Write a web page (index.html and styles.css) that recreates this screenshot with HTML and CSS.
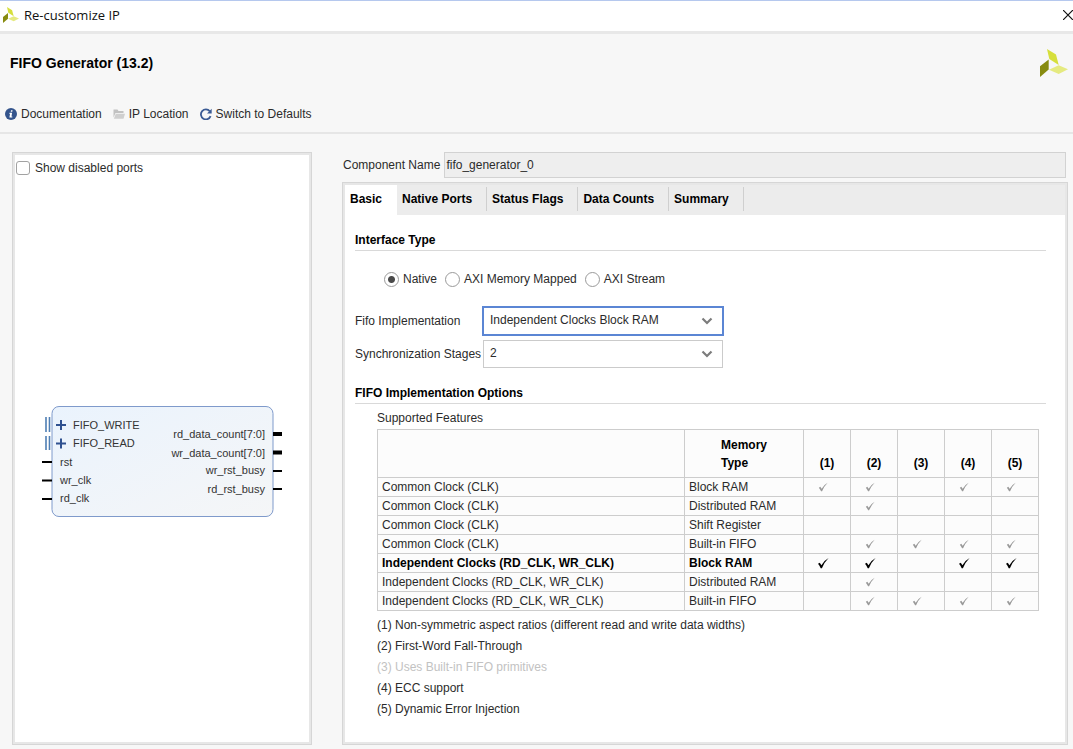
FILE: index.html
```html
<!DOCTYPE html>
<html lang="en">
<head>
<meta charset="utf-8">
<title>Re-customize IP</title>
<link rel="stylesheet" href="styles.css">
</head>
<body>
<svg class="defs" aria-hidden="true">
  <symbol id="logo" viewBox="0 0 28 28">
    <path d="M7 0 16 5.500 18.700 16 9.300 10Z" fill="#d6df3c"/>
    <path d="M0 17.300 8.700 10.500V20.500L0 28Z" fill="#878b10"/>
    <path d="M9 20.700 18.700 16.200 28 20.300 18.700 25Z" fill="#e5ea80"/>
  </symbol>
  <symbol id="check" viewBox="0 0 12 12">
    <path d="M1 6.800 2.800 5.800 4.400 8.200Q7 3.500 11.600 1 7.300 5.200 4.900 11.200H3.700Q2.600 8.500 1 6.800Z" fill="currentColor"/>
  </symbol>
  <symbol id="chevron" viewBox="0 0 12 8">
    <path d="M1.500 1.500 6 6 10.500 1.500" fill="none" stroke="#7c7c7c" stroke-width="2.200"/>
  </symbol>
</svg>

<header class="titlebar">
  <svg class="titlebar-logo" aria-hidden="true"><use href="#logo"/></svg>
  <span class="titlebar-text">Re-customize IP</span>
  <button class="close" aria-label="Close"><svg viewBox="0 0 10 10"><path d="M0 0 10 10M10 0 0 10" stroke="#111" stroke-width="1.200"/></svg></button>
</header>

<section class="heading">
  <div class="heading-row">
    <h1>FIFO Generator (13.2)</h1>
    <svg class="brand" aria-hidden="true"><use href="#logo"/></svg>
  </div>
  <nav class="toolbar">
    <button class="tool">
      <svg viewBox="0 0 12 12"><circle cx="6" cy="6" r="6" fill="#34548c"/><path d="M6 2.200h1.600l-.3 1.600H5.700ZM4.600 4.800h2.500L6.500 8.600h.8v1H4.400l.6-3.700h-.6Z" fill="#fff"/></svg>
      Documentation
    </button>
    <button class="tool">
      <svg viewBox="0 0 12 12"><path d="M.5 9.500V1.500H4.500L5.500 3H10.500V5H2.500Z" fill="#c2c2c2"/><path d="M2.800 5.800H12L10.500 10.800H.8Z" fill="#cfcfcf"/></svg>
      IP Location
    </button>
    <button class="tool">
      <svg viewBox="0 0 12 12"><path d="M9.800 3.200A5 5 0 1 0 10.600 8.200" fill="none" stroke="#3a5a94" stroke-width="1.800"/><path d="M11.700.8V5.400H7Z" fill="#3a5a94"/></svg>
      Switch to Defaults
    </button>
  </nav>
</section>

<main class="workspace">
  <section class="panel preview">
    <label class="ports-toggle"><input type="checkbox" class="checkbox">Show disabled ports</label>
    <div class="canvas">
      <svg class="block" viewBox="0 0 244 112" role="img" aria-label="FIFO block diagram">
        <defs>
          <linearGradient id="fill" x1="0" y1="0" x2="1" y2="1">
            <stop offset="0" stop-color="#eaf3fd"/><stop offset="1" stop-color="#f5f6f7"/>
          </linearGradient>
        </defs>
        <rect x="12" y=".5" width="221" height="110" rx="7" fill="url(#fill)" stroke="#7f9acb"/>
        <path d="M6 11V26M9.500 11V26M6 30V44M9.500 30V44" stroke="#4f7fb4" stroke-width="1.600"/>
        <path d="M16 19H26M21 14V24M16 37.500H26M21 32.500V42.500" stroke="#2f5190" stroke-width="2"/>
        <path d="M2 56H12M2 74.500H12M2 93H12M233 65H242M233 83H242" stroke="#000" stroke-width="2"/>
        <path d="M233 28H242M233 46.500H242" stroke="#000" stroke-width="4"/>
        <g class="port">
          <text x="33" y="23">FIFO_WRITE</text>
          <text x="33" y="41">FIFO_READ</text>
          <text x="20" y="60">rst</text>
          <text x="20" y="78">wr_clk</text>
          <text x="20" y="96">rd_clk</text>
        </g>
        <g class="port port-out">
          <text x="225" y="32">rd_data_count[7:0]</text>
          <text x="225" y="51">wr_data_count[7:0]</text>
          <text x="225" y="68">wr_rst_busy</text>
          <text x="225" y="87">rd_rst_busy</text>
        </g>
      </svg>
    </div>
  </section>

  <section class="config">
    <div class="name-row">
      <label for="component">Component Name</label>
      <input id="component" class="name-input" type="text" value="fifo_generator_0" readonly>
    </div>

    <div class="panel options">
      <div class="tabs" role="tablist">
        <button class="tab tab-active" role="tab" aria-selected="true">Basic</button>
        <button class="tab" role="tab">Native Ports</button>
        <button class="tab" role="tab">Status Flags</button>
        <button class="tab" role="tab">Data Counts</button>
        <button class="tab" role="tab">Summary</button>
      </div>

      <div class="tab-body" role="tabpanel">
        <h2>Interface Type</h2>
        <div class="radios">
          <label><input type="radio" class="radio" name="iface" checked>Native</label>
          <label><input type="radio" class="radio" name="iface">AXI Memory Mapped</label>
          <label><input type="radio" class="radio" name="iface">AXI Stream</label>
        </div>

        <div class="fields">
          <label for="impl">Fifo Implementation</label>
          <div class="select-box">
            <select id="impl" class="select select-focus"><option>Independent Clocks Block RAM</option></select>
            <svg class="chevron" aria-hidden="true"><use href="#chevron"/></svg>
          </div>
          <label for="stages">Synchronization Stages</label>
          <div class="select-box">
            <select id="stages" class="select"><option>2</option></select>
            <svg class="chevron" aria-hidden="true"><use href="#chevron"/></svg>
          </div>
        </div>

        <h2>FIFO Implementation Options</h2>
        <div class="features">
          <table>
            <caption>Supported Features</caption>
            <colgroup><col><col class="col-type"><col class="col-mark" span="5"></colgroup>
            <thead>
              <tr><th></th><th class="type-head">Memory<br>Type</th><th>(1)</th><th>(2)</th><th>(3)</th><th>(4)</th><th>(5)</th></tr>
            </thead>
            <tbody>
              <tr><td>Common Clock (CLK)</td><td>Block RAM</td><td class="mark"><svg><use href="#check"/></svg></td><td class="mark"><svg><use href="#check"/></svg></td><td></td><td class="mark"><svg><use href="#check"/></svg></td><td class="mark"><svg><use href="#check"/></svg></td></tr>
              <tr><td>Common Clock (CLK)</td><td>Distributed RAM</td><td></td><td class="mark"><svg><use href="#check"/></svg></td><td></td><td></td><td></td></tr>
              <tr><td>Common Clock (CLK)</td><td>Shift Register</td><td></td><td></td><td></td><td></td><td></td></tr>
              <tr><td>Common Clock (CLK)</td><td>Built-in FIFO</td><td></td><td class="mark"><svg><use href="#check"/></svg></td><td class="mark"><svg><use href="#check"/></svg></td><td class="mark"><svg><use href="#check"/></svg></td><td class="mark"><svg><use href="#check"/></svg></td></tr>
              <tr class="current"><td>Independent Clocks (RD_CLK, WR_CLK)</td><td>Block RAM</td><td class="mark"><svg><use href="#check"/></svg></td><td class="mark"><svg><use href="#check"/></svg></td><td></td><td class="mark"><svg><use href="#check"/></svg></td><td class="mark"><svg><use href="#check"/></svg></td></tr>
              <tr><td>Independent Clocks (RD_CLK, WR_CLK)</td><td>Distributed RAM</td><td></td><td class="mark"><svg><use href="#check"/></svg></td><td></td><td></td><td></td></tr>
              <tr><td>Independent Clocks (RD_CLK, WR_CLK)</td><td>Built-in FIFO</td><td></td><td class="mark"><svg><use href="#check"/></svg></td><td class="mark"><svg><use href="#check"/></svg></td><td class="mark"><svg><use href="#check"/></svg></td><td class="mark"><svg><use href="#check"/></svg></td></tr>
            </tbody>
          </table>
          <ul class="notes">
            <li>(1) Non-symmetric aspect ratios (different read and write data widths)</li>
            <li>(2) First-Word Fall-Through</li>
            <li class="unused">(3) Uses Built-in FIFO primitives</li>
            <li>(4) ECC support</li>
            <li>(5) Dynamic Error Injection</li>
          </ul>
        </div>
      </div>
    </div>
  </section>
</main>
</body>
</html>
```
FILE: styles.css
```css
* { box-sizing: border-box; }

body {
  margin: 0;
  min-height: 100vh;
  display: flex;
  flex-direction: column;
  background: #f7f7f7;
  color: #2b2b2b;
  font: 12px/18px "Liberation Sans", Arial, sans-serif;
}

button, input, select { font: inherit; color: inherit; }
button { border: 0; background: none; padding: 0; }
svg { display: block; }
.defs { display: none; }

/* Window title */
.titlebar {
  display: flex;
  align-items: center;
  height: 34px;
  padding: 0 0 2px 3px;
  background: #fff;
  border-top: 1px solid #b5c8ee;
  border-bottom: 3px solid #e8e8e8;
}
.titlebar-logo { width: 16px; height: 16px; }
.titlebar-text {
  flex: 1;
  padding-left: 5px;
  font-family: "Open Sans", "Noto Sans", sans-serif;
  font-size: 13px;
  color: #111;
}
.close { width: 10px; height: 10px; }
.close svg { width: 10px; height: 10px; }

/* Heading and toolbar */
.heading {
  padding: 14px 5px 9px;
  border-bottom: 2px solid #e6e6e6;
}
.heading-row {
  display: flex;
  align-items: center;
  justify-content: space-between;
  height: 30px;
  padding-left: 5px;
}
h1 { margin: 0; font-size: 14px; line-height: 24px; color: #000; }
.brand { width: 28px; height: 28px; }
.toolbar { display: flex; gap: 11px; padding-top: 27px; }
.tool { display: flex; align-items: center; gap: 4px; line-height: 18px; }
.tool svg { width: 12px; height: 12px; }

/* Main area */
.workspace {
  flex: 1;
  display: grid;
  grid-template-columns: 300px 1fr;
  gap: 30px;
  padding: 18px 5px 4px 12px;
}
.panel {
  background: #fff;
  border: 1px solid #d6d6d6;
  box-shadow: inset 0 0 0 2px #e7e7e7;
  padding: 2px;
}

.preview { display: flex; flex-direction: column; }
.ports-toggle { display: flex; align-items: center; gap: 5px; padding: 4px 1px; }
.checkbox {
  appearance: none;
  width: 14px;
  height: 14px;
  margin: 0;
  border: 1px solid #a2a2a2;
  border-radius: 3px;
  background: #fff;
}
.canvas { flex: 1; display: flex; align-items: center; justify-content: center; }
.block { width: 244px; height: 112px; }
.port { font-size: 11px; fill: #333; }
.port-out { text-anchor: end; }

.config { display: flex; flex-direction: column; gap: 4px; }
.name-row { display: flex; align-items: center; gap: 4px; padding: 0 2px 0 1px; }
.name-input {
  flex: 1;
  height: 26px;
  padding: 0 1px;
  border: 1px solid #d2d2d2;
  background: #eee;
  outline: 0;
}
.options { flex: 1; }

.tabs { display: flex; background: #ececec; }
.tab {
  height: 30px;
  padding: 0 15px 2px 5px;
  font-weight: bold;
  color: #000;
  background: linear-gradient(#cfcfcf, #cfcfcf) right 2px / 1px 24px no-repeat;
}
.tab-active { background: #fff; }

.tab-body { padding: 16px 19px 12px 10px; }
h2 {
  margin: 0;
  padding-bottom: 1px;
  border-bottom: 1px solid #d9d9d9;
  font-size: 12px;
  line-height: 18px;
  color: #000;
}
.radios { display: flex; gap: 8px; padding: 19px 0 18px 29px; }
.radios label { display: flex; align-items: center; gap: 4px; }
.radio {
  appearance: none;
  width: 15px;
  height: 15px;
  margin: 0;
  border: 1px solid #9a9a9a;
  border-radius: 50%;
  background: #fff;
}
.radio:checked { background: radial-gradient(circle, #4a4a4a 3px, #fff 4px); }

.fields {
  display: grid;
  grid-template-columns: 127px 242px;
  row-gap: 4px;
  align-items: center;
  padding-bottom: 16px;
}
.select-box { display: grid; align-items: center; }
.select {
  grid-area: 1 / 1;
  appearance: none;
  height: 28px;
  margin: 0 1px;
  padding: 0 30px 2px 6px;
  border: 1px solid #cbcbcb;
  border-radius: 0;
  background: #fff;
}
.select-focus { height: 30px; margin: 0; padding: 0 30px 2px 6px; border: 2px solid #5b86d4; }
.chevron {
  grid-area: 1 / 1;
  justify-self: end;
  width: 12px;
  height: 8px;
  margin-right: 11px;
  pointer-events: none;
}

/* Feature matrix */
.features { padding: 5px 7px 0 22px; }
table {
  width: 100%;
  table-layout: fixed;
  border-collapse: collapse;
  background: #fcfcfc;
}
caption { padding-bottom: 2px; text-align: left; line-height: 18px; }
.col-type { width: 119px; }
.col-mark { width: 47px; }
th, td { border: 1px solid #cdcdcd; padding: 0 4px; text-align: left; }
th { height: 48px; padding: 5px 0; vertical-align: bottom; text-align: center; color: #000; }
.type-head { padding-left: 36px; text-align: left; }
.mark { padding: 0 8px 0 0; color: #999; }
.mark svg { width: 10px; height: 10px; margin: 0 auto; }
.current { font-weight: bold; color: #000; }
.current .mark { color: #000; }
.current .mark svg { width: 12px; height: 12px; }
.notes { margin: 0; padding: 4px 0 0; list-style: none; line-height: 21px; }
.unused { color: #c2c2c2; }
```
